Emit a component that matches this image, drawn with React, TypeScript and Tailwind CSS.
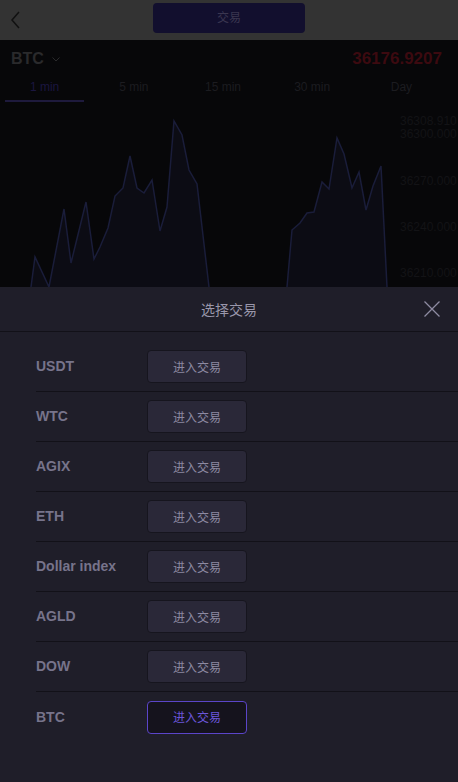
import React from "react";

const rows = ["USDT", "WTC", "AGIX", "ETH", "Dollar index", "AGLD", "DOW", "BTC"];
const tabs = ["1 min", "5 min", "15 min", "30 min", "Day"];

const left: [number, number][] = [
  [31, 287], [35, 257], [49, 287], [64, 209], [71, 263], [86, 202], [94, 259], [100, 247],
  [108, 228], [115, 196], [123, 188], [130, 156], [137, 188], [144, 193], [152, 180],
  [160, 231], [167, 207], [174, 121], [182, 135], [189, 170], [197, 184], [209, 287],
];
const right: [number, number][] = [
  [287, 287], [292, 230], [300, 223], [307, 213], [314, 212], [322, 182], [329, 189],
  [337, 138], [344, 154], [352, 188], [359, 172], [366, 210], [373, 186], [381, 166], [387, 287],
];

function pts(a: [number, number][], yOff: number) {
  return a.map(([x, y]) => `${x},${y - yOff}`).join(" ");
}

export default function App() {
  const sans = { fontFamily: '"Liberation Sans", "Noto Sans CJK SC", sans-serif' };
  return (
    <div className="w-[458px] h-[782px] overflow-hidden flex flex-col bg-[#070709]" style={sans}>
      {/* dimmed top bar */}
      <div className="h-[40px] bg-[#333333] flex items-center relative shrink-0">
        <svg className="absolute left-[10px] top-[11px]" width="12" height="18" viewBox="0 0 12 18">
          <path d="M9 1 L2 9 L9 17" fill="none" stroke="#111111" strokeWidth="1.5" />
        </svg>
        <div className="mx-auto w-[152px] h-[30px] mt-[-4px] rounded-[4px] bg-[#120f2e] flex items-center justify-center text-[12px] text-[#3a3650]">
          交易
        </div>
      </div>

      {/* dimmed market area */}
      <div className="h-[247px] shrink-0 flex flex-col bg-[#070709] relative">
        <div className="h-[35px] flex items-center justify-between pl-[11px] pr-[16px] pt-[3px]">
          <div className="flex items-center gap-[8px]">
            <span className="text-[16px] font-bold text-[#2a2a2c]">BTC</span>
            <svg width="8" height="5" viewBox="0 0 8 5">
              <path d="M0.5 0.5 L4 4 L7.5 0.5" fill="none" stroke="#2a2a2c" strokeWidth="1" />
            </svg>
          </div>
          <span className="text-[17px] font-bold text-[#3c0a10]">36176.9207</span>
        </div>
        <div className="w-[446px] flex h-[27px]">
          {tabs.map((t, i) => (
            <div key={t} className="flex-1 flex flex-col items-center justify-start">
              <span className={`text-[12px] leading-[24px] ${i === 0 ? "text-[#1b1640]" : "text-[#1c1c20]"}`}>{t}</span>
              {i === 0 && <div className="w-[79px] h-[2px] bg-[#1e1a3d] mt-[1px]" />}
            </div>
          ))}
        </div>
        <div className="flex-1 relative">
          <svg className="absolute left-0 top-0" width="458" height="185" viewBox="0 0 458 185">
            <polygon points={pts(left, 102)} fill="#0c0c14" />
            <polyline points={pts(left, 102)} fill="none" stroke="#1a1d3a" strokeWidth="1.5" />
            <polygon points={pts(right, 102)} fill="#0c0c14" />
            <polyline points={pts(right, 102)} fill="none" stroke="#1a1d3a" strokeWidth="1.5" />
          </svg>
          {[
            ["36308.910", 121],
            ["36300.000", 134],
            ["36270.000", 181],
            ["36240.000", 227],
            ["36210.000", 273],
          ].map(([l, y]) => (
            <span
              key={l as string}
              className="absolute left-[400px] text-[12px] leading-[14px] text-[#131316] whitespace-nowrap"
              style={{ top: (y as number) - 102 - 7 }}
            >
              {l}
            </span>
          ))}
        </div>
      </div>

      {/* bottom sheet */}
      <div className="flex-1 bg-[#1f1e29] flex flex-col">
        <div className="h-[45px] border-b border-[#121118] flex items-center justify-center relative shrink-0">
          <span className="text-[14px] text-[#9a97ab]" style={{ fontFamily: '"Noto Sans CJK SC", sans-serif' }}>选择交易</span>
          <svg className="absolute left-[424px] top-[14px]" width="16" height="16" viewBox="0 0 16 16">
            <path d="M0.5 0.5 L15.5 15.5 M15.5 0.5 L0.5 15.5" stroke="#8e8ba2" strokeWidth="1.3" />
          </svg>
        </div>
        <div className="pt-[10px] pl-[36px]">
          {rows.map((r, i) => {
            const last = i === rows.length - 1;
            return (
              <div
                key={r}
                className={`h-[50px] flex items-center ${last ? "" : "border-b border-[#121118]"}`}
              >
                <span className="w-[111px] text-[14px] font-bold text-[#77748b]">{r}</span>
                <div
                  className={`w-[100px] h-[33px] rounded-[4px] border flex items-center justify-center text-[12px] ${
                    last
                      ? "bg-[#15131d] border-[#5b45c9] text-[#6b56da]"
                      : "bg-[#2a2838] border-[#16151e] text-[#8c89a1]"
                  }`}
                  style={{ fontFamily: '"Noto Sans CJK SC", sans-serif' }}
                >
                  进入交易
                </div>
              </div>
            );
          })}
        </div>
      </div>
    </div>
  );
}
